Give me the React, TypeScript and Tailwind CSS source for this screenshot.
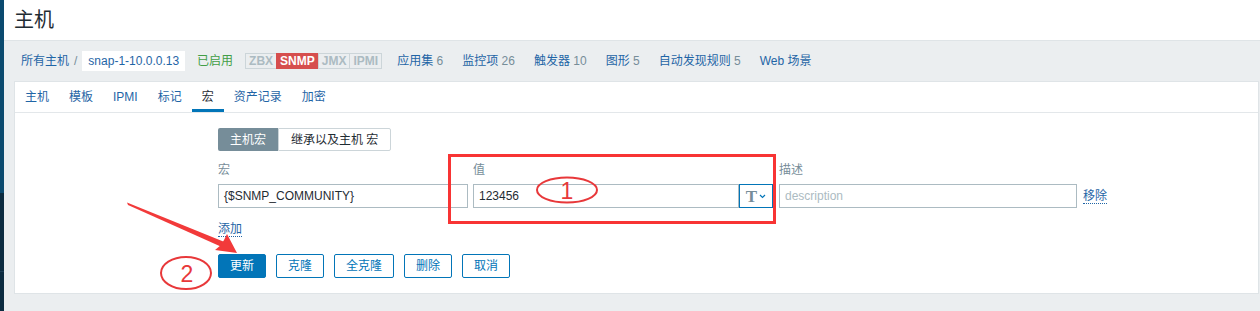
import React from "react";

const LINKS: [string, string][] = [
  ["应用集", "6"],
  ["监控项", "26"],
  ["触发器", "10"],
  ["图形", "5"],
  ["自动发现规则", "5"],
  ["Web 场景", ""],
];

const TABS = ["主机", "模板", "IPMI", "标记", "宏", "资产记录", "加密"];

const FONT = { fontFamily: '"Liberation Sans", Arial, "Noto Sans CJK SC", sans-serif' };

function Badge({ label, on }: { label: string; on?: boolean }) {
  return (
    <span
      className={
        on
          ? "-ml-px h-[16px] px-[3px] flex items-center bg-[#d64e4e] border border-[#d64e4e] text-white text-[12px] font-bold"
          : "-ml-px first:ml-0 h-[16px] px-[3px] flex items-center border border-[#ccd5d9] text-[#acbbc2] text-[12px] font-bold"
      }
    >
      {label}
    </span>
  );
}

function Annotations() {
  return (
    <svg className="absolute left-0 top-0 pointer-events-none" width="1260" height="311">
      <rect x="449.5" y="155.5" width="325" height="67" fill="none" stroke="#f83434" strokeWidth="3" />
      <ellipse cx="567" cy="190" rx="30" ry="12.5" fill="none" stroke="#e8383a" strokeWidth="2" />
      <text x="567" y="199" textAnchor="middle" fontSize="23" fill="#e8383a" fontFamily="Liberation Sans, Arial, sans-serif">
        1
      </text>
      <ellipse cx="186" cy="273" rx="25" ry="16" fill="none" stroke="#e8383a" strokeWidth="2" />
      <text x="187" y="282" textAnchor="middle" fontSize="23" fill="#e8383a" fontFamily="Liberation Sans, Arial, sans-serif">
        2
      </text>
      {/* arrow */}
      <polygon points="127,202.5 128,205 224,248 227,243" fill="#f23a3a" />
      <polygon points="237,253 215,250 221,245 224,240 227,234" fill="#f23a3a" />
    </svg>
  );
}

export default function App() {
  return (
    <div className="relative w-[1260px] h-[311px] flex overflow-hidden bg-[#ebeef0]" style={FONT}>
      <div className="w-[4px] flex flex-col shrink-0">
        <div className="h-[193px] bg-[#0b4a6f]" />
        <div className="h-[79px] bg-[#0c2b40] border-b border-[#1d3d55]" />
        <div className="flex-1 bg-[#0c2b40]" />
      </div>

      <div className="flex-1 flex flex-col">
        <div className="h-[41px] bg-white flex items-center pl-[10px] border-b border-[#dfe4e7]">
          <h1 className="text-[20px] text-[#1f2c33] leading-none">主机</h1>
        </div>

        <div className="h-[40px] flex items-center pl-[17px] text-[12px]">
          <a className="text-[#1f65a6]">所有主机</a>
          <span className="text-[#768d99] mx-[5px]">/</span>
          <span className="h-[20px] px-[6px] bg-white text-[#1f65a6] flex items-center">snap-1-10.0.0.13</span>
          <span className="text-[#429e47] ml-[12px]">已启用</span>
          <div className="flex ml-[12px]">
            <Badge label="ZBX" />
            <Badge label="SNMP" on />
            <Badge label="JMX" />
            <Badge label="IPMI" />
          </div>
          <div className="flex gap-[19px] ml-[15px]">
            {LINKS.map(([name, n]) => (
              <span key={name} className="text-[#1f65a6]">
                {name}
                {n && <span className="text-[#768d99]"> {n}</span>}
              </span>
            ))}
          </div>
        </div>

        <div className="ml-[10px] mr-[1px] h-[213px] bg-white border border-[#dfe4e7] flex flex-col">
          <div className="h-[31px] flex items-stretch border-b border-[#e3e7ea] text-[12px]">
            {TABS.map((t) => (
              <span
                key={t}
                className={
                  t === "宏"
                    ? "px-[10px] flex items-center text-[#1f2c33] border-b-[3px] border-[#0275b8] pt-[3px]"
                    : "px-[10px] flex items-center text-[#1f65a6]"
                }
              >
                {t}
              </span>
            ))}
          </div>

          <div className="pl-[203px] pt-[15px] text-[12px]">
            <div className="flex h-[23px]">
              <span className="px-[12px] flex items-center bg-[#768d99] text-white rounded-l-[2px]">主机宏</span>
              <span className="px-[12px] flex items-center border border-[#ccd5d9] text-[#1f2c33] rounded-r-[2px]">
                继承以及主机 宏
              </span>
            </div>

            <div className="flex mt-[8px] gap-[5px]">
              <div className="flex flex-col w-[250px]">
                <span className="text-[#768d99] h-[21px] flex items-center">宏</span>
                <div className="mt-[4px] h-[24px] border border-[#acbbc2] px-[5px] flex items-center text-[#1f2c33]">
                  {"{$SNMP_COMMUNITY}"}
                </div>
              </div>
              <div className="flex flex-col w-[300px]">
                <span className="text-[#768d99] h-[21px] flex items-center">值</span>
                <div className="mt-[4px] h-[24px] flex">
                  <div className="flex-1 border border-[#acbbc2] px-[5px] flex items-center text-[#1f2c33]">123456</div>
                  <div className="w-[34px] border border-[#0275b8] flex items-center justify-center gap-[2px]">
                    <span className="text-[#768d99] text-[17px] font-bold leading-none" style={{ fontFamily: '"Liberation Serif", serif' }}>
                      T
                    </span>
                    <svg width="7" height="5" viewBox="0 0 7 5">
                      <path d="M1 1 L3.5 3.5 L6 1" fill="none" stroke="#0275b8" strokeWidth="1.2" />
                    </svg>
                  </div>
                </div>
              </div>
              <div className="flex flex-col w-[298px] ml-[1px]">
                <span className="text-[#768d99] h-[21px] flex items-center">描述</span>
                <div className="mt-[4px] h-[24px] border border-[#acbbc2] px-[5px] flex items-center text-[#acbbc2]">
                  description
                </div>
              </div>
              <div className="flex flex-col">
                <span className="h-[21px]" />
                <div className="mt-[4px] h-[24px] flex items-center pl-[1px]">
                  <span className="text-[#1f65a6] border-b border-dotted border-[#1f65a6] leading-[14px]">移除</span>
                </div>
              </div>
            </div>

            <div className="mt-[12px] h-[18px] flex items-center">
              <span className="text-[#1f65a6] border-b border-dotted border-[#1f65a6] leading-[14px]">添加</span>
            </div>

            <div className="flex gap-[10px] mt-[16px]">
              <button className="h-[24px] px-[11px] bg-[#0275b8] border border-[#0275b8] text-white rounded-[2px]">更新</button>
              {["克隆", "全克隆", "删除", "取消"].map((b) => (
                <button key={b} className="h-[24px] px-[11px] bg-white border border-[#0275b8] text-[#0275b8] rounded-[2px]">
                  {b}
                </button>
              ))}
            </div>
          </div>
        </div>
      </div>

      <Annotations />
    </div>
  );
}
